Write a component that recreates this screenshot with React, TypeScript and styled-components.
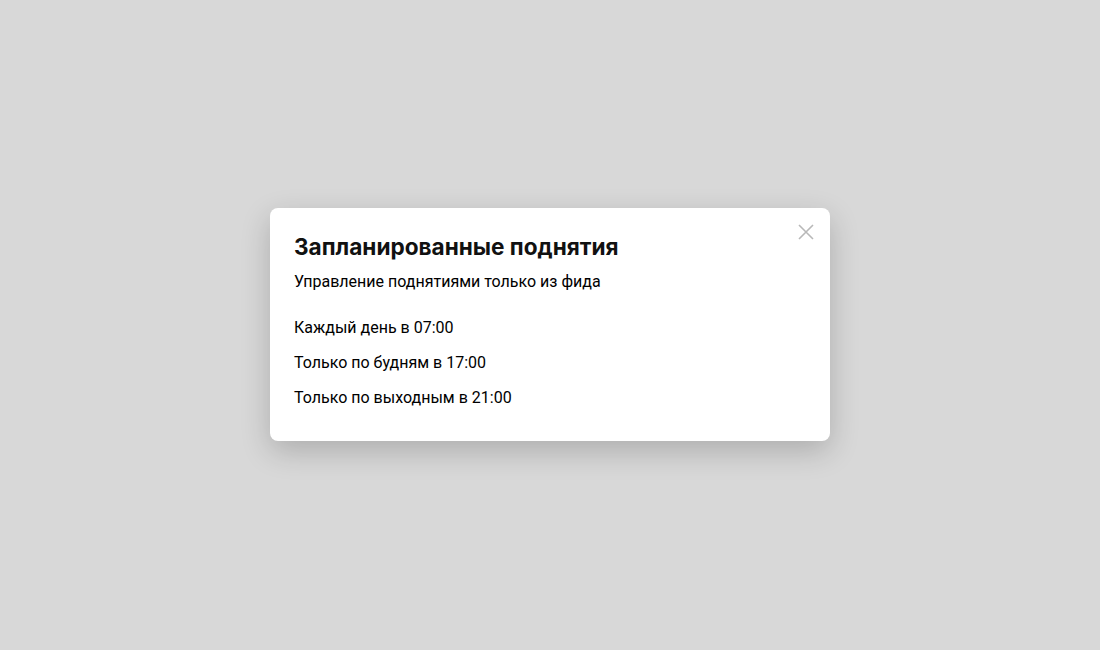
import React from "react";
import styled, { createGlobalStyle } from "styled-components";

const GlobalStyle = createGlobalStyle`
  html, body {
    margin: 0;
    padding: 0;
    height: 100%;
  }
  body {
    background: #d8d8d8;
    font-family: Roboto, "Noto Sans", Inter, sans-serif;
    color: #000;
  }
  #root {
    height: 100%;
  }
`;

const Overlay = styled.div`
  height: 100%;
  display: flex;
  align-items: center;
  justify-content: center;
  background: #d8d8d8;
`;

const Modal = styled.div`
  position: relative;
  box-sizing: border-box;
  width: 560px;
  margin-bottom: 2px;
  padding: 25px 24px 32px;
  background: #fff;
  border-radius: 8px;
  box-shadow: 0 10px 30px rgba(0, 0, 0, 0.2);
`;

const CloseButton = styled.button`
  position: absolute;
  top: 16px;
  right: 16px;
  width: 16px;
  height: 16px;
  padding: 0;
  border: none;
  background: none;
  cursor: pointer;
  display: flex;

  svg {
    stroke: #b8b8b8;
  }
`;

const Title = styled.h2`
  margin: 0;
  font-family: Inter, "Noto Sans", sans-serif;
  font-size: 22.6px;
  line-height: 28px;
  font-weight: 700;
  color: #111;
`;

const Subtitle = styled.p`
  margin: 10px 0 0;
  font-size: 16px;
  line-height: 22px;
`;

const ScheduleList = styled.ul`
  list-style: none;
  margin: 24px 0 0;
  padding: 0;
  display: flex;
  flex-direction: column;
  gap: 13px;
`;

const ScheduleItem = styled.li`
  font-size: 16px;
  line-height: 22px;
`;

const schedules = [
  "Каждый день в 07:00",
  "Только по будням в 17:00",
  "Только по выходным в 21:00",
];

const App: React.FC = () => {
  return (
    <>
      <GlobalStyle />
      <Overlay>
        <Modal>
          <CloseButton aria-label="Закрыть">
            <svg width="16" height="16" viewBox="0 0 16 16" fill="none" strokeWidth="1.6">
              <path d="M1 1L15 15M15 1L1 15" />
            </svg>
          </CloseButton>
          <Title>Запланированные поднятия</Title>
          <Subtitle>Управление поднятиями только из фида</Subtitle>
          <ScheduleList>
            {schedules.map((s) => (
              <ScheduleItem key={s}>{s}</ScheduleItem>
            ))}
          </ScheduleList>
        </Modal>
      </Overlay>
    </>
  );
};

export default App;
